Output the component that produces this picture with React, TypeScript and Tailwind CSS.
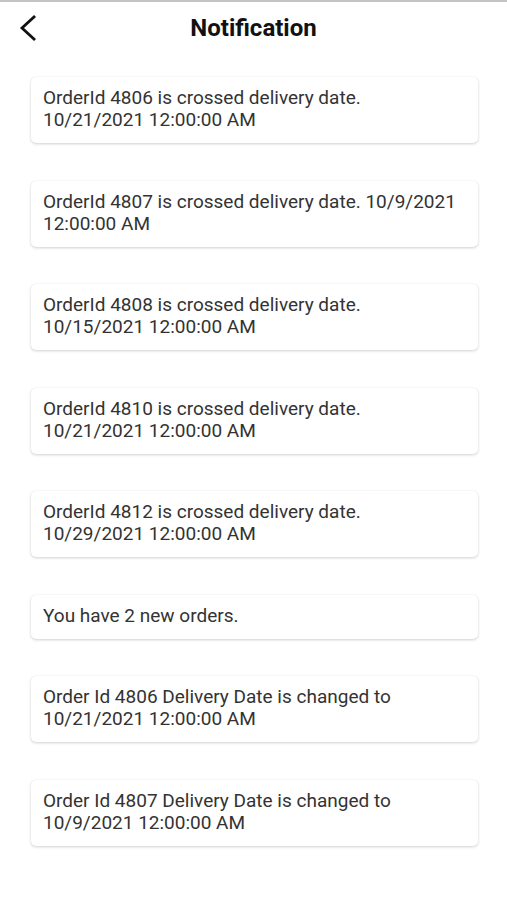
const notifications = [
  "OrderId 4806 is crossed delivery date. 10/21/2021 12:00:00 AM",
  "OrderId 4807 is crossed delivery date. 10/9/2021 12:00:00 AM",
  "OrderId 4808 is crossed delivery date. 10/15/2021 12:00:00 AM",
  "OrderId 4810 is crossed delivery date. 10/21/2021 12:00:00 AM",
  "OrderId 4812 is crossed delivery date. 10/29/2021 12:00:00 AM",
  "You have 2 new orders.",
  "Order Id 4806 Delivery Date is changed to 10/21/2021 12:00:00 AM",
  "Order Id 4807 Delivery Date is changed to 10/9/2021 12:00:00 AM",
];

function App() {
  return (
    <div className="min-h-screen w-full bg-white font-['Roboto',sans-serif]">
      <div className="h-[2px] bg-[#c4c4c4]" />
      <header className="relative flex h-[52px] items-center justify-center">
        <button className="absolute left-[16px] top-[11px] text-[#111]">
          <svg width="24" height="30" viewBox="0 0 24 30" fill="none">
            <polyline
              points="18,4 6,15 18,26"
              stroke="currentColor"
              strokeWidth="2.8"
              strokeLinecap="square"
              strokeLinejoin="miter"
            />
          </svg>
        </button>
        <h1 className="text-[24px] font-bold text-[#111]">Notification</h1>
      </header>

      <main className="mt-[23px] flex flex-col gap-[37.5px] pl-[31px] pr-[29px]">
        {notifications.map((text, i) => (
          <div
            key={i}
            className="rounded-[5px] bg-white pt-[10px] pb-[12px] pl-[12px] pr-[14px] text-[19px] leading-[22px] text-[#333] shadow-[0_1px_3px_rgba(0,0,0,0.18),0_0_1px_rgba(0,0,0,0.08)]"
          >
            {text}
          </div>
        ))}
      </main>
    </div>
  );
}

export default App;
